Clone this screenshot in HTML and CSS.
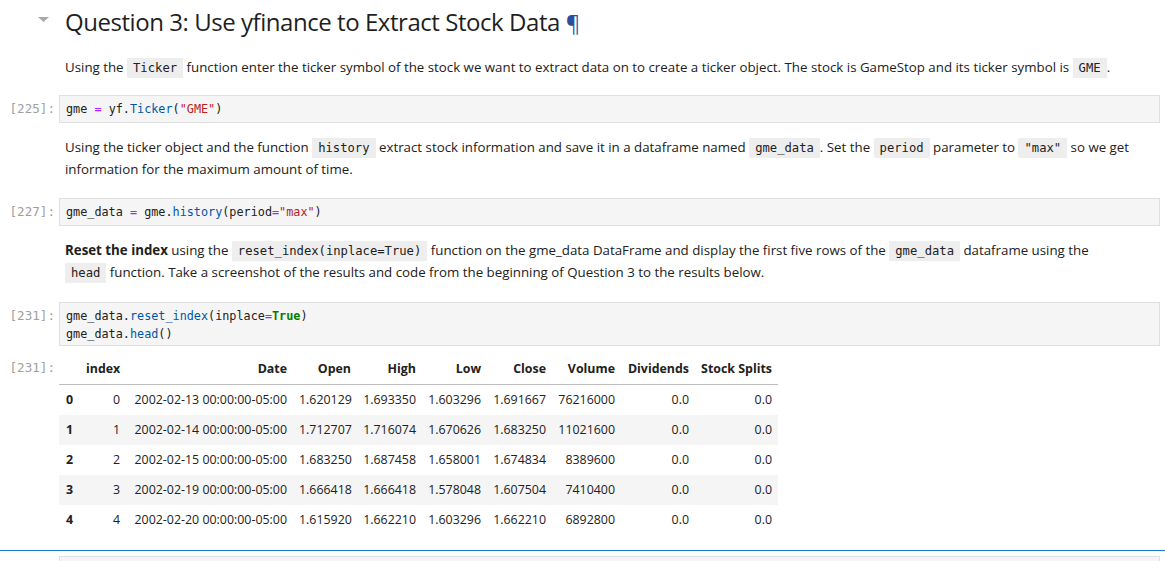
FILE: index.html
```html
<!DOCTYPE html>
<html>
<head>
<meta charset="utf-8">
<link rel="stylesheet" href="styles.css">
</head>
<body>
<div class="notebook">
  <div class="cell heading-cell">
    <div class="prompt"><svg class="collapser" width="11" height="5" viewBox="0 0 11 5"><polygon points="0,0 11,0 5.5,5" fill="#a8a8a8"/></svg></div>
    <div class="content"><h2>Question 3: Use yfinance to Extract Stock Data <a class="anchor">¶</a></h2></div>
  </div>

  <div class="cell md md1">
    <div class="prompt"></div>
    <div class="content"><p>Using the <code>Ticker</code> function enter the ticker symbol of the stock we want to extract data on to create a ticker object. The stock is GameStop and its ticker symbol is <code>GME</code>.</p></div>
  </div>

  <div class="cell code code1">
    <div class="prompt">[225]:</div>
    <div class="editor"><pre>gme <span class="op">=</span> yf.<span class="prop">Ticker</span>(<span class="str">"GME"</span>)</pre></div>
  </div>

  <div class="cell md md2">
    <div class="prompt"></div>
    <div class="content"><p>Using the ticker object and the function <code>history</code> extract stock information and save it in a dataframe named <code>gme_data</code>. Set the <code>period</code> parameter to <code>"max"</code> so we get information for the maximum amount of time.</p></div>
  </div>

  <div class="cell code code2">
    <div class="prompt">[227]:</div>
    <div class="editor"><pre>gme_data <span class="op">=</span> gme.<span class="prop">history</span>(period<span class="op">=</span><span class="str">"max"</span>)</pre></div>
  </div>

  <div class="cell md md3">
    <div class="prompt"></div>
    <div class="content"><p><strong>Reset the index</strong> using the <code>reset_index(inplace=True)</code> function on the gme_data DataFrame and display the first five rows of the <code>gme_data</code> dataframe using the <code>head</code> function. Take a screenshot of the results and code from the beginning of Question 3 to the results below.</p></div>
  </div>

  <div class="cell code code3">
    <div class="prompt">[231]:</div>
    <div class="editor"><div class="line">gme_data.<span class="prop">reset_index</span>(inplace<span class="op">=</span><span class="kw">True</span>)</div><div class="line">gme_data.<span class="prop">head</span>()</div></div>
  </div>

  <div class="cell output">
    <div class="prompt out-prompt">[231]:</div>
    <div class="out-content">
      <table class="df">
        <colgroup>
          <col class="c-rh"><col class="c-idx"><col class="c-date"><col class="c-open"><col class="c-high"><col class="c-low"><col class="c-close"><col class="c-vol"><col class="c-div"><col class="c-split">
        </colgroup>
        <thead>
          <tr><th></th><th>index</th><th>Date</th><th>Open</th><th>High</th><th>Low</th><th>Close</th><th>Volume</th><th>Dividends</th><th>Stock Splits</th></tr>
        </thead>
        <tbody>
          <tr><th>0</th><td>0</td><td>2002-02-13 00:00:00-05:00</td><td>1.620129</td><td>1.693350</td><td>1.603296</td><td>1.691667</td><td>76216000</td><td>0.0</td><td>0.0</td></tr>
          <tr><th>1</th><td>1</td><td>2002-02-14 00:00:00-05:00</td><td>1.712707</td><td>1.716074</td><td>1.670626</td><td>1.683250</td><td>11021600</td><td>0.0</td><td>0.0</td></tr>
          <tr><th>2</th><td>2</td><td>2002-02-15 00:00:00-05:00</td><td>1.683250</td><td>1.687458</td><td>1.658001</td><td>1.674834</td><td>8389600</td><td>0.0</td><td>0.0</td></tr>
          <tr><th>3</th><td>3</td><td>2002-02-19 00:00:00-05:00</td><td>1.666418</td><td>1.666418</td><td>1.578048</td><td>1.607504</td><td>7410400</td><td>0.0</td><td>0.0</td></tr>
          <tr><th>4</th><td>4</td><td>2002-02-20 00:00:00-05:00</td><td>1.615920</td><td>1.662210</td><td>1.603296</td><td>1.662210</td><td>6892800</td><td>0.0</td><td>0.0</td></tr>
        </tbody>
      </table>
    </div>
  </div>

  <div class="active-line"></div>
  <div class="cell code next">
    <div class="prompt"></div>
    <div class="editor empty"></div>
  </div>
</div>
</body>
</html>
```

FILE: styles.css
```css
html, body {
  margin: 0;
  padding: 0;
  background: #ffffff;
  overflow: hidden;
}
body {
  font-family: "Open Sans", "Noto Sans", sans-serif;
  color: #212121;
  font-size: 13.3px;
}
.notebook {
  padding-right: 5px;
}
.cell {
  display: flex;
  align-items: flex-start;
}
.prompt {
  flex: 0 0 59px;
  width: 59px;
  box-sizing: border-box;
  padding-right: 4px;
  text-align: right;
  font-family: "DejaVu Sans Mono", monospace;
  font-size: 12.6px;
  color: #a0a0a0;
  line-height: 18px;
  white-space: nowrap;
}
.content {
  flex: 1;
  padding-left: 6px;
  padding-right: 27px;
}
.heading-cell .prompt {
  padding-top: 17px;
  padding-right: 10px;
}
.collapser {
  display: block;
  margin-left: auto;
}
h2 {
  margin: 6px 0 0 0;
  font-size: 24px;
  letter-spacing: -0.45px;
  line-height: 32px;
  font-weight: 400;
  color: #1f1f1f;
}
.anchor {
  color: #2c4ea0;
  font-size: 22px;
  text-decoration: none;
  letter-spacing: 0;
}
p {
  margin: 0;
  line-height: 22.5px;
}
strong { font-weight: 700; }
code {
  font-family: "DejaVu Sans Mono", monospace;
  font-size: 12.2px;
  line-height: 1;
  background: #eeeeee;
  padding: 3px 6px;
  color: #212121;
}
.md1 { margin-top: 18px; }
.code1 { margin-top: 16px; }
.md2 { margin-top: 13px; }
.code2 { margin-top: 17px; }
.md3 { margin-top: 13px; }
.code3 { margin-top: 18px; }
.code .prompt {
  padding-top: 5px;
}
.editor {
  flex: 1;
  background: #f5f5f5;
  border: 1px solid #e0e0e0;
  padding: 4px 6px;
  min-width: 0;
}
.editor pre, .editor .line {
  margin: 0;
  font-family: "DejaVu Sans Mono", monospace;
  font-size: 11.8px;
  line-height: 18px;
  height: 18px;
  color: #212121;
  white-space: pre;
}
.code3 .editor {
  padding-bottom: 2px;
}
.op { color: #aa22ff; }
.prop { color: #0055aa; }
.str { color: #ba2121; }
.kw { color: #008000; font-weight: 700; }

.output { margin-top: 8px; }
.out-prompt {
  padding-top: 5px;
}
.out-content { flex: 1; }
.df {
  border-collapse: collapse;
  table-layout: fixed;
  width: 719px;
  font-size: 12.4px;
  color: #212121;
}
.c-rh { width: 21px; }
.c-idx { width: 46px; }
.c-date { width: 167px; }
.c-open { width: 64px; }
.c-high { width: 65px; }
.c-low { width: 65px; }
.c-close { width: 65px; }
.c-vol { width: 69px; }
.c-div { width: 74px; }
.c-split { width: 83px; }
.df th, .df td {
  padding: 6px 6px;
  line-height: 18px;
  text-align: right;
  white-space: nowrap;
  overflow: visible;
}
.df thead th {
  font-weight: 700;
  border-bottom: 1px solid #bdbdbd;
  height: 17px;
}
.df tbody th {
  text-align: left;
  font-weight: 700;
  padding-left: 7px;
}
.df tbody tr:nth-child(even) {
  background: #f5f5f5;
}
.active-line {
  margin-top: 15.5px;
  height: 1px;
  background: #1976d2;
  margin-right: -5px;
}
.next { margin-top: 5px; }
.editor.empty {
  height: 40px;
}
```
